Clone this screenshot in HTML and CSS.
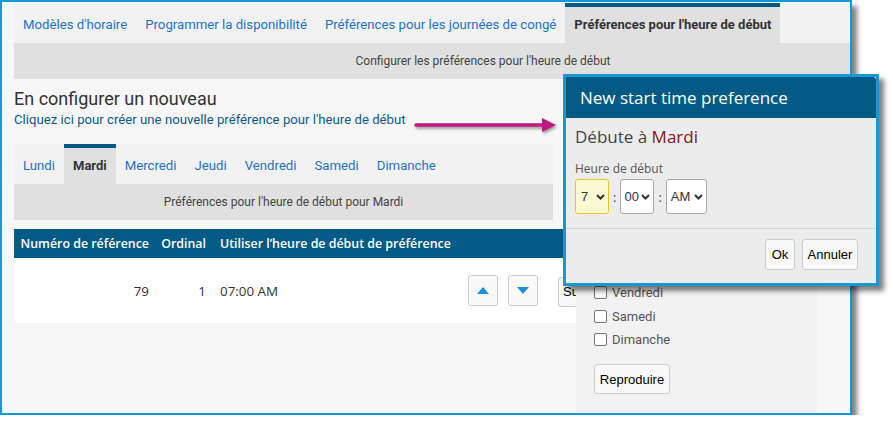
FILE: index.html
```html
<!DOCTYPE html>
<html lang="fr">
<head>
    <meta charset="UTF-8">
    <meta name="viewport" content="width=device-width, initial-scale=1.0">
    <title>Préférences pour l'heure de début</title>
    <link rel="stylesheet" href="styles.css">
</head>

<body>
    <div class="shot">
        <div class="page">
            <div class="tabs">
                <a class="tab">Modèles d'horaire</a>
                <a class="tab">Programmer la disponibilité</a>
                <a class="tab">Préférences pour les journées de congé</a>
                <a class="tab active">Préférences pour l'heure de début</a>
            </div>
            <div class="band">Configurer les préférences pour l'heure de début</div>

            <h2 class="new-title">En configurer un nouveau</h2>
            <a class="new-link">Cliquez ici pour créer une nouvelle préférence pour l'heure de début</a>

            <div class="days">
                <div class="tabs">
                    <a class="tab">Lundi</a>
                    <a class="tab active">Mardi</a>
                    <a class="tab">Mercredi</a>
                    <a class="tab">Jeudi</a>
                    <a class="tab">Vendredi</a>
                    <a class="tab">Samedi</a>
                    <a class="tab">Dimanche</a>
                </div>
                <div class="band">Préférences pour l'heure de début pour Mardi</div>
            </div>

            <div class="pref-table">
                <div class="pref-head">
                    <div class="c-ref">Numéro de référence</div>
                    <div class="c-ord">Ordinal</div>
                    <div class="c-time">Utiliser l’heure de début de préférence</div>
                </div>
                <div class="pref-row">
                    <div class="c-ref">79</div>
                    <div class="c-ord">1</div>
                    <div class="c-time">07:00 AM</div>
                    <div class="c-actions">
                        <button class="move-btn">
                            <svg width="12" height="7" viewBox="0 0 12 7"><polygon points="0,7 6,0 12,7" fill="#1c8edb"/></svg>
                        </button>
                        <button class="move-btn">
                            <svg width="12" height="7" viewBox="0 0 12 7"><polygon points="0,0 12,0 6,7" fill="#1c8edb"/></svg>
                        </button>
                        <button class="plain-btn delete-btn">Supprimer</button>
                    </div>
                </div>
            </div>
        </div>

        <!-- copy-to-other-days popover -->
        <div class="copy-panel">
            <label class="copy-day"><span class="check"></span>Lundi</label>
            <label class="copy-day"><span class="check"></span>Mercredi</label>
            <label class="copy-day"><span class="check"></span>Jeudi</label>
            <label class="copy-day"><span class="check"></span>Mardi</label>
            <label class="copy-day"><span class="check"></span>Vendredi</label>
            <label class="copy-day"><span class="check"></span>Samedi</label>
            <label class="copy-day"><span class="check"></span>Dimanche</label>
            <button class="plain-btn reproduce-btn">Reproduire</button>
        </div>
    </div>

    <svg class="pointer" width="150" height="22" viewBox="0 0 150 22">
        <line x1="4" y1="9" x2="133" y2="9" stroke="#c0187e" stroke-width="3.5" stroke-linecap="round"/>
        <polygon points="130,2 144,9 130,16" fill="#c0187e"/>
    </svg>

    <div class="dialog">
        <div class="dialog-head">New start time preference</div>
        <div class="dialog-body">
            <div class="day-title">Débute à <span class="day-name">Mardi</span></div>
            <div class="time-label">Heure de début</div>
            <div class="time-row">
                <div class="select hour">
                    <span>7</span>
                    <svg width="9" height="6" viewBox="0 0 9 6"><polyline points="1,1 4.5,4.5 8,1" fill="none" stroke="#333" stroke-width="2"/></svg>
                </div>
                <span class="colon">:</span>
                <div class="select minute">
                    <span>00</span>
                    <svg width="9" height="6" viewBox="0 0 9 6"><polyline points="1,1 4.5,4.5 8,1" fill="none" stroke="#333" stroke-width="2"/></svg>
                </div>
                <span class="colon">:</span>
                <div class="select ampm">
                    <span>AM</span>
                    <svg width="9" height="6" viewBox="0 0 9 6"><polyline points="1,1 4.5,4.5 8,1" fill="none" stroke="#333" stroke-width="2"/></svg>
                </div>
            </div>
        </div>
        <div class="dialog-foot">
            <button class="plain-btn ok-btn">Ok</button>
            <button class="plain-btn cancel-btn">Annuler</button>
        </div>
    </div>
</body>
</html>
```

FILE: styles.css
```css
body {
    margin: 0;
    background-color: #ffffff;
    font-family: 'Roboto', 'Liberation Sans', sans-serif;
}

.shot {
    position: relative;
    width: 852px;
    height: 415px;
    box-sizing: border-box;
    border: 2px solid #1598d6;
    background-color: #f7f7f7;
    overflow: hidden;
    box-shadow: 5px 6px 5px rgba(0, 0, 0, 0.5);
}

.page {
    width: 938px;
    padding: 1px 0 0 12px;
}

/* tab strips */
.tabs {
    display: flex;
    height: 40px;
    background-color: #f2f2f2;
}

.tab {
    padding: 0 9px;
    border-top: 4px solid transparent;
    line-height: 36px;
    font-size: 13.2px;
    color: #1f73c6;
    white-space: nowrap;
}

.tab.active {
    background-color: #e0e0e0;
    border-top-color: #035a85;
    color: #333333;
    font-size: 13px;
    font-weight: 700;
}

.band {
    height: 36px;
    line-height: 36px;
    background-color: #e0e0e0;
    text-align: center;
    font-size: 12px;
    color: #444444;
}

.new-title {
    margin: 9px 0 0;
    font-size: 18px;
    font-weight: 400;
    line-height: 22px;
    color: #333333;
}

.new-link {
    display: block;
    margin-top: 1px;
    font-size: 13.2px;
    line-height: 17px;
    color: #0d5a8a;
}

.days {
    width: 539px;
    margin-top: 16px;
}

/* preference table */
.pref-table {
    width: 686px;
    margin-top: 9px;
    font-family: 'Open Sans', sans-serif;
    font-size: 12.4px;
}

.pref-head {
    display: flex;
    align-items: center;
    height: 29px;
    background-color: #035a85;
    color: #ffffff;
    font-weight: 600;
}

.pref-row {
    display: flex;
    align-items: center;
    height: 65px;
    background-color: #ffffff;
    border-radius: 0 0 4px 4px;
    color: #333333;
    font-size: 13.4px;
}

.c-ref {
    width: 142px;
    box-sizing: border-box;
    padding-right: 7px;
    text-align: right;
    white-space: nowrap;
}

.c-ord {
    width: 57px;
    box-sizing: border-box;
    padding-right: 7px;
    text-align: right;
}

.c-time {
    width: 248px;
    box-sizing: border-box;
    padding-left: 7px;
    white-space: nowrap;
}

.c-actions {
    display: flex;
    align-items: center;
    gap: 10px;
    padding-left: 7px;
}

.move-btn {
    width: 30px;
    height: 31px;
    display: flex;
    align-items: center;
    justify-content: center;
    padding: 0;
    border: 1px solid #cccccc;
    border-radius: 3px;
    background-color: #f9f9f9;
}

.plain-btn {
    height: 30px;
    padding: 0 6px;
    border: 1px solid #cccccc;
    border-radius: 3px;
    background-color: #f8f8f8;
    font-family: 'Liberation Sans', sans-serif;
    font-size: 13px;
    color: #000000;
}

.delete-btn {
    margin-left: 10px;
    margin-top: 2px;
    padding: 0 4px;
}

/* popover with the days to copy to */
.copy-panel {
    position: absolute;
    left: 574px;
    top: 173px;
    bottom: 0;
    width: 241px;
    box-sizing: border-box;
    padding: 12px 0 0 18px;
    background-color: #f2f2f2;
}

.copy-day {
    display: flex;
    align-items: center;
    height: 23.5px;
    font-size: 13px;
    color: #555555;
}

.check {
    width: 11px;
    height: 11px;
    margin-right: 5px;
    border: 1px solid #767676;
    border-radius: 2px;
    background-color: #ffffff;
}

.reproduce-btn {
    margin-top: 12.5px;
    width: 76px;
    padding: 0;
}

.pointer {
    position: absolute;
    left: 412px;
    top: 116px;
    filter: drop-shadow(1px 2px 1.5px rgba(0, 0, 0, 0.4));
}

/* modal */
.dialog {
    position: absolute;
    left: 563px;
    top: 74px;
    width: 316px;
    height: 212px;
    box-sizing: border-box;
    border: 3px solid #1598d6;
    background-color: #ececec;
    box-shadow: 5px 5px 5px rgba(0, 0, 0, 0.5);
    font-family: 'Open Sans', sans-serif;
}

.dialog-head {
    height: 41px;
    line-height: 41px;
    padding-left: 14px;
    background-color: #035a85;
    border-radius: 0 3px 0 0;
    color: #ffffff;
    font-size: 17px;
}

.dialog-body {
    padding: 7px 0 14px 9px;
    border-bottom: 1px solid #d6d6d6;
}

.day-title {
    font-size: 17px;
    line-height: 24px;
    color: #444444;
}

.day-name {
    color: #8b1414;
}

.time-label {
    margin-top: 12px;
    font-size: 12px;
    line-height: 16px;
    color: #555555;
}

.time-row {
    display: flex;
    align-items: center;
    margin-top: 2px;
}

.select {
    height: 35px;
    box-sizing: border-box;
    display: flex;
    align-items: center;
    justify-content: space-between;
    padding: 0 3px 0 4px;
    border: 1px solid #aaaaaa;
    border-radius: 3px;
    background-color: #ffffff;
    font-family: 'Liberation Sans', sans-serif;
    font-size: 13px;
    color: #333333;
}

.select.hour {
    width: 34px;
    padding-left: 5px;
    background-color: #fafad2;
    border-color: #f0c419;
}

.select.minute {
    width: 34px;
    padding-left: 3px;
}

.select.ampm {
    width: 41px;
}

.colon {
    margin: 0 4px;
    color: #444444;
    font-size: 13px;
}

.dialog-foot {
    display: flex;
    justify-content: flex-end;
    gap: 7px;
    padding: 10px 18px 0 0;
}

.ok-btn {
    width: 30px;
    height: 31px;
    padding: 0;
}

.cancel-btn {
    width: 56px;
    height: 31px;
    padding: 0;
}
```
